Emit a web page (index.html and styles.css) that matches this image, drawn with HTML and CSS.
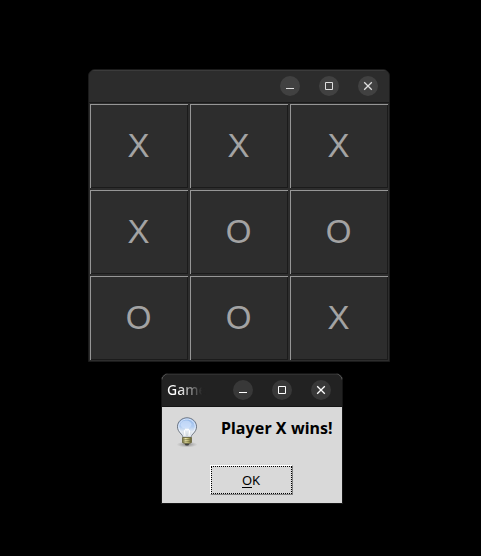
FILE: index.html
```html
<!DOCTYPE html>
<html lang="en">
<head>
<meta charset="utf-8">
<title>Tic Tac Toe</title>
<link rel="stylesheet" href="styles.css">
</head>
<body>
<svg class="defs" width="0" height="0">
  <symbol id="min" viewBox="0 0 20 20"><path d="M6 12.5h8" /></symbol>
  <symbol id="max" viewBox="0 0 20 20"><path d="M6.500 6.500h7v7h-7z" /></symbol>
  <symbol id="close" viewBox="0 0 20 20"><path d="M6.200 6.200l7.600 7.600M13.800 6.200l-7.600 7.600" stroke-width="1.300"/></symbol>
</svg>
<main class="desktop">
  <section class="window game">
    <header class="titlebar">
      <div class="controls">
        <svg class="control"><use href="#min"/></svg>
        <svg class="control"><use href="#max"/></svg>
        <svg class="control"><use href="#close"/></svg>
      </div>
    </header>
    <div class="board">
      <div class="cell">X</div><div class="cell">X</div><div class="cell">X</div>
      <div class="cell">X</div><div class="cell">O</div><div class="cell">O</div>
      <div class="cell">O</div><div class="cell">O</div><div class="cell">X</div>
    </div>
  </section>
  <section class="window dialog">
    <header class="titlebar">
      <span class="title">Game</span>
      <div class="controls">
        <svg class="control"><use href="#min"/></svg>
        <svg class="control"><use href="#max"/></svg>
        <svg class="control"><use href="#close"/></svg>
      </div>
    </header>
    <div class="content">
      <div class="message">
        <svg class="bulb" viewBox="0 0 32 32">
          <defs>
            <radialGradient id="shadow"><stop offset="0" stop-color="#555" stop-opacity=".65"/><stop offset="1" stop-color="#777" stop-opacity="0"/></radialGradient>
            <linearGradient id="glass" x1="0" y1="0" x2="0" y2="1"><stop offset="0" stop-color="#8eb4e8"/><stop offset=".45" stop-color="#b3cef2"/><stop offset=".7" stop-color="#e4eaf0"/><stop offset="1" stop-color="#c9ced4"/></linearGradient>
            <linearGradient id="brass"><stop offset="0" stop-color="#777344"/><stop offset=".35" stop-color="#eeeab0"/><stop offset=".65" stop-color="#b9b36c"/><stop offset="1" stop-color="#57532f"/></linearGradient>
          </defs>
          <ellipse cx="16" cy="28.500" rx="10.500" ry="3" fill="url(#shadow)"/>
          <path d="M12 21.500C12 18 6.500 16.500 6.500 10.800C6.500 5.600 10.800 1.800 16 1.800S25.500 5.600 25.500 10.800C25.500 16.500 20 18 20 21.500z" fill="url(#glass)" stroke="#6d7580"/>
          <path d="M12.700 20.500C12.500 17.500 7.700 15.700 7.700 10.800C7.700 6.500 11.500 3 16 3S24.300 6.500 24.300 10.800C24.300 15.700 19.500 17.500 19.300 20.500" fill="none" stroke="#edf4ff" stroke-opacity=".8"/>
          <ellipse cx="15" cy="8.500" rx="5.500" ry="4" fill="#dbeaff" opacity=".55"/>
          <path d="M14 20l-.5-5 1.500-2 1 1.500 1-1.500 1.500 2L18 20" fill="none" stroke="#fff" stroke-width="1.100"/>
          <path d="M11.500 21.500h9v5l-2 1h-5l-2-1z" fill="url(#brass)" stroke="#6b673d" stroke-width=".8"/>
          <path d="M11.500 24l9-.8M11.500 26.200l9-.8" stroke="#716d3d" stroke-width=".7"/>
          <path d="M13.500 27.800h5l-1.200 1.700h-2.600z" fill="#414141"/>
        </svg>
        <p class="text">Player X wins!</p>
      </div>
      <button class="ok"><span class="label"><span class="key">O</span>K</span></button>
    </div>
  </section>
</main>
</body>
</html>
```
FILE: styles.css
```css
* { box-sizing: border-box; }

body {
  margin: 0;
  background: #000;
  font-family: "Noto Sans", sans-serif;
}

.defs { position: absolute; }

.desktop {
  position: relative;
  width: 481px;
  height: 556px;
  overflow: hidden;
  background: #000;
}

.window {
  position: absolute;
  border: 1px solid #1b1b1b;
  border-radius: 7px 7px 0 0;
  overflow: hidden;
}

.game {
  left: 88px;
  top: 69px;
  width: 302px;
  height: 293px;
  background: #2d2d2d;
}

.dialog {
  left: 161px;
  top: 373px;
  width: 182px;
  height: 131px;
  border-color: #151515;
  background: #d9d9d9;
}

.titlebar {
  display: flex;
  align-items: center;
  height: 33px;
  padding-bottom: 1px;
  background: #2c2c2c;
  border-top: 1px solid #3b3b3b;
  border-bottom: 1px solid #1a1a1a;
}

.dialog .titlebar {
  padding-left: 5px;
  background: #222;
  border-top-color: #303030;
  border-bottom-color: #151515;
}

.controls {
  display: flex;
  gap: 19px;
  margin-left: auto;
  padding-right: 11px;
}

.control {
  display: block;
  width: 20px;
  height: 20px;
  border-radius: 50%;
  background: #414141;
  fill: none;
  stroke: #dedede;
  stroke-width: 1;
}

.dialog .control {
  background: #383838;
  stroke: #fff;
}

.board {
  display: grid;
  grid-template-columns: repeat(3, 98px);
  grid-auto-rows: 84px;
  gap: 2px;
  padding: 1px;
}

.cell {
  display: flex;
  align-items: center;
  justify-content: center;
  padding-right: 1px;
  box-shadow: inset 1px 0 #969696, inset 0 1px #969696, inset -1px 0 #1b1b1b, inset 0 -1px #1b1b1b;
  color: #a3a3a3;
  font: 33px/38px "Liberation Sans", sans-serif;
}

.title {
  width: 40px;
  font-size: 14px;
  font-weight: 500;
  line-height: 20px;
  color: transparent;
  background: linear-gradient(90deg, #fff 30%, #222 88%);
  background-clip: text;
}

.content {
  display: flex;
  flex-direction: column;
  align-items: center;
}

.message {
  display: flex;
  align-self: stretch;
  padding: 9px 9px 0;
}

.bulb {
  width: 32px;
  height: 32px;
}

.text {
  margin: 0 0 0 18px;
  font-size: 16px;
  font-weight: 700;
  line-height: 24px;
  letter-spacing: 0.08px;
  white-space: nowrap;
  color: #000;
}

.ok {
  display: flex;
  align-items: center;
  justify-content: center;
  width: 83px;
  height: 30px;
  margin: 17px 1px 0 0;
  padding: 0 1px 0 0;
  border: 1px solid;
  border-color: #fff #828282 #828282 #fff;
  background: #d9d9d9;
  outline: 1px dotted #000;
  outline-offset: -2px;
  font: 13px/18px "Noto Sans", sans-serif;
  color: #000;
}

.key {
  display: inline-block;
  height: 17px;
  border-bottom: 1px solid #000;
}
```
